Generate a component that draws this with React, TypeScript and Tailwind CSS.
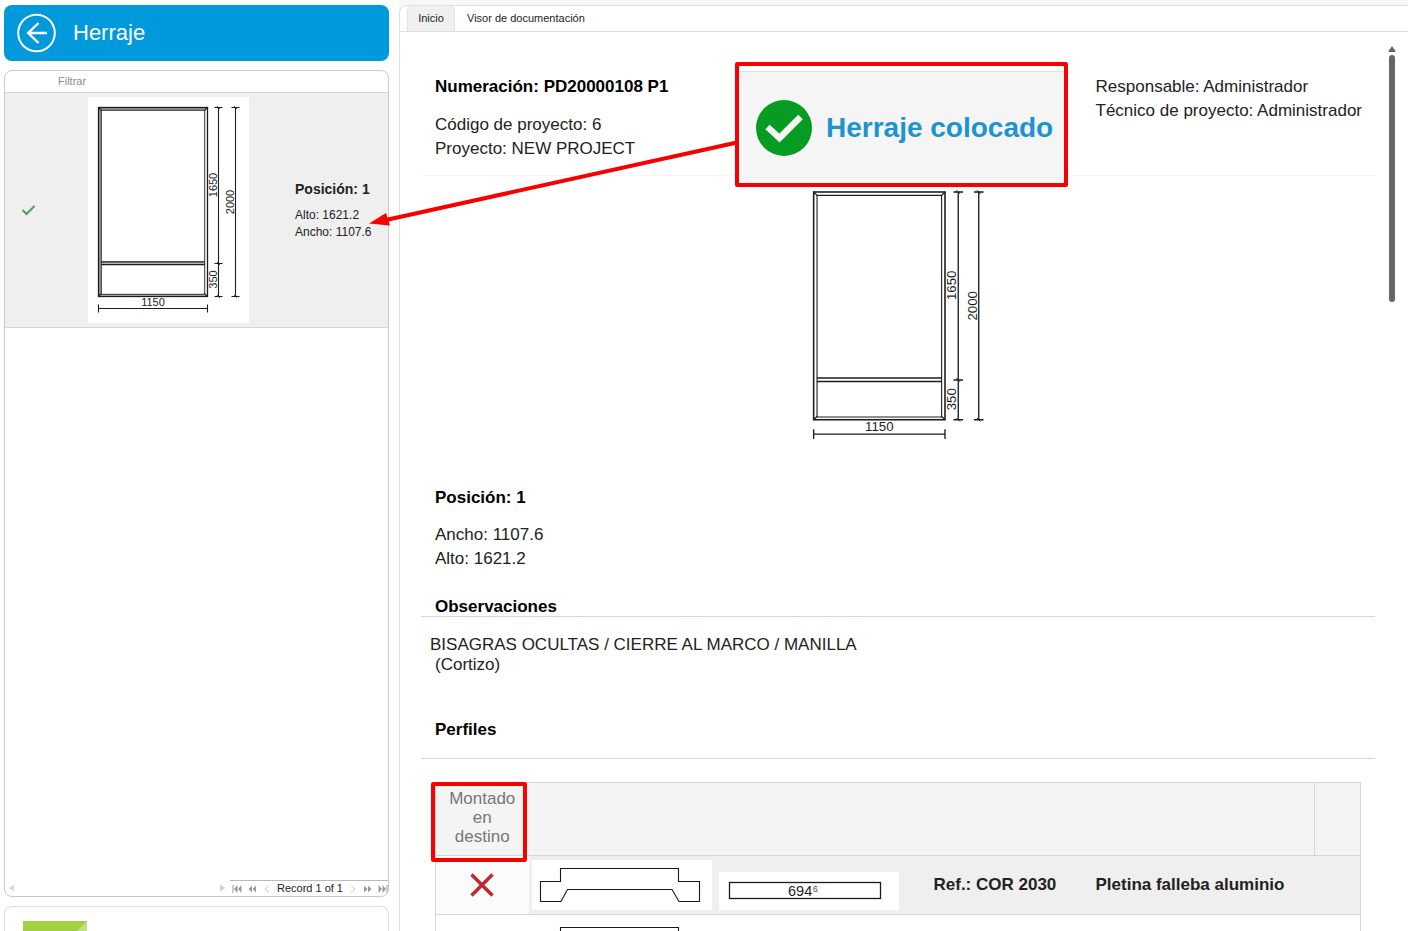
import type { ReactNode } from "react";

function WindowDrawing({ className, shaded }: { className: string; shaded?: boolean }) {
  return (
    <svg viewBox="0 0 161 226" className={className} role="img" aria-label="Ventana 1150 x 2000">
      <rect width="161" height="226" fill="#fff" />
      {shaded && (
        <g fill="#9c9c9c">
          <path d="M10.5 10.5H119.5L116.7 13.3H13.3V197.3L10.5 199.500Z" />
          <path d="M13.3 164.500H116.7V167H13.3ZM13.3 197.3H116.7L119.5 199.5H10.500Z" fill="#b4b4b4" />
        </g>
      )}
      <g fill="none" stroke="#1c1c1c" strokeWidth="1.1">
        <rect x="10.5" y="10.5" width="109" height="189" strokeWidth="1.3" />
        <path d="M13.3 197.3V13.3H116.7V197.3Z" strokeWidth="0.9" />
        <path d="M13.3 164.9H116.7M13.3 167.7H116.7" strokeWidth="1.3" />
        <path d="M10.5 10.5l3 3M119.5 10.5l-3 3M10.5 199.5l3-3M119.5 199.5l-3-3" />
        <path d="M130.5 10.5V199.5M147.5 10.5V199.5M10.5 211.5H119.5" />
        <path d="M126.5 10.5h8M126.5 166.5h8M126.5 199.5h8M143.5 10.5h8M143.5 199.5h8" />
        <path d="M129 9l3 3M129 165l3 3M129 198l3 3M146 9l3 3M146 198l3 3" strokeWidth="0.8" />
        <path d="M10.5 207.5v8M119.5 207.5v8" />
      </g>
      <g fill="#1c1c1c" fontSize="11" textAnchor="middle" fontFamily="Liberation Sans, sans-serif">
        <text x="65" y="209">1150</text>
        <text transform="translate(128.5 88) rotate(-90)">1650</text>
        <text transform="translate(128.5 182.5) rotate(-90)">350</text>
        <text transform="translate(146 105) rotate(-90)">2000</text>
      </g>
    </svg>
  );
}

function ProfileDrawing() {
  return (
    <svg viewBox="0 0 180 50" className="h-[50px] w-[180px] bg-white" role="img" aria-label="Perfil">
      <path
        d="M8.5 21.5H28.5V8.5H146.5V21.5H167.5V41.5H147L140 29.5H35.5L29 41.5H8.5Z"
        fill="none"
        stroke="#1a1a1a"
        strokeWidth="1.1"
      />
    </svg>
  );
}

function PagerButton({ label, faint, children }: { label: string; faint?: boolean; children: ReactNode }) {
  return (
    <button type="button" aria-label={label} className={faint ? "text-[#cfcfcf]" : "text-[#9a9a9a]"}>
      <svg viewBox="0 0 10 10" className="size-[10px]" fill="currentColor">
        {children}
      </svg>
    </button>
  );
}

function Sidebar() {
  return (
    <aside className="flex h-full w-[389px] shrink-0 flex-col gap-[9px] pl-1 pt-[5px]">
      <header className="flex h-14 shrink-0 items-center gap-[17px] rounded-lg bg-[#0099dc] pb-px pl-3 text-white">
        <button type="button" aria-label="Volver">
          <svg viewBox="0 0 40 40" className="size-10" fill="none" stroke="currentColor">
            <circle cx="20.5" cy="20" r="18.3" strokeWidth="2" />
            <path d="M31 20H12M22.5 10L12.2 20L22.5 30" strokeWidth="2.4" />
          </svg>
        </button>
        <h1 className="text-[22px]">Herraje</h1>
      </header>

      <section className="flex min-h-0 flex-1 flex-col overflow-hidden rounded-lg border border-[#c9c9c9]">
        <div className="flex h-[22px] shrink-0 items-center border-b border-[#d6d6d6] pl-[53px]">
          <button type="button" className="text-[11px] text-[#8a8a8a]">
            Filtrar
          </button>
        </div>
        <div className="flex items-center border-b border-[#d6d6d6] bg-[#efefef] py-1">
          <div className="flex w-[83px] shrink-0 pl-4">
            <svg viewBox="0 0 16 14" className="h-[14px] w-4" fill="none" stroke="#4c9f62" strokeWidth="2">
              <path d="M1.5 7L5.5 11L13.5 3" />
            </svg>
          </div>
          <WindowDrawing className="h-[226px] w-[161px] shrink-0" shaded />
          <div className="pl-[46px] text-[#222]">
            <h2 className="mb-2 text-sm leading-5 font-bold">Posición: 1</h2>
            <p className="text-xs leading-[17px]">Alto: 1621.2</p>
            <p className="text-xs leading-[17px]">Ancho: 1107.6</p>
          </div>
        </div>
        <footer className="mt-auto flex h-4 items-center">
          <svg viewBox="0 0 6 8" className="ml-[3px] h-2 w-1.5" fill="#dcdcdc">
            <path d="M6 0.5V7.5L0.5 4Z" />
          </svg>
          <svg viewBox="0 0 6 8" className="mr-1 ml-auto h-2 w-1.5" fill="#d0d0d0">
            <path d="M0 0.5V7.5L5.5 4Z" />
          </svg>
          <nav aria-label="Registros" className="flex h-full items-center gap-[5px] border-t border-[#b9b9b9] pl-0.5">
            <PagerButton label="Primero">
              <path d="M0.5 1H1.5V9H0.5ZM5.5 1V9L2 5ZM9.5 1V9L6 5Z" />
            </PagerButton>
            <PagerButton label="Página anterior">
              <path d="M5 1.5V8.5L1.5 5ZM9 1.5V8.5L5.5 5Z" />
            </PagerButton>
            <PagerButton label="Anterior" faint>
              <path d="M7 1.5L3 5L7 8.5" fill="none" stroke="currentColor" />
            </PagerButton>
            <span className="text-[11px] whitespace-nowrap text-[#222]">Record 1 of 1</span>
            <PagerButton label="Siguiente" faint>
              <path d="M3 1.5L7 5L3 8.5" fill="none" stroke="currentColor" />
            </PagerButton>
            <PagerButton label="Página siguiente">
              <path d="M1 1.5V8.5L4.5 5ZM5 1.5V8.5L8.5 5Z" />
            </PagerButton>
            <PagerButton label="Último">
              <path d="M8.5 1H9.5V9H8.5ZM0.5 1V9L4 5ZM4.5 1V9L8 5Z" />
            </PagerButton>
          </nav>
        </footer>
      </section>

      <section className="h-[25px] shrink-0 overflow-hidden rounded-t-lg border border-b-0 border-[#e0e0e0] pt-[14px] pl-[18px]">
        <svg viewBox="0 0 64 12" className="h-3 w-16">
          <rect width="64" height="12" fill="#a4cf42" />
          <path d="M64 0V12H52Z" fill="#bfe07c" />
        </svg>
      </section>
    </aside>
  );
}

function ProfilesTable() {
  return (
    <table className="w-full table-fixed border-collapse border border-[#d6d6d6] text-[17px]">
      <colgroup>
        <col className="w-[93px]" />
        <col className="w-[187px]" />
        <col className="w-[187px]" />
        <col className="w-[171px]" />
        <col />
        <col className="w-[46px]" />
      </colgroup>
      <thead className="bg-[#f4f4f4]">
        <tr className="h-[73px]">
          <th className="relative px-3 pb-1 leading-[19px] font-normal text-[#777]">
            Montado en destino
            <span className="absolute -top-px right-[2px] -bottom-[7px] -left-[5px] rounded-xs border-4 border-[#f80000]" />
          </th>
          <th colSpan={4} />
          <th className="border-l border-[#d6d6d6]" />
        </tr>
      </thead>
      <tbody>
        <tr className="h-[59px] border-y border-[#d6d6d6] bg-[#efefef] text-[#222]">
          <td className="bg-[#fcfcfc]">
            <svg viewBox="0 0 24 24" className="mx-auto size-6" stroke="#c1272d" strokeWidth="3.4" role="img" aria-label="No">
              <path d="M1.5 1.5L22.5 22.5M22.5 1.5L1.5 22.5" />
            </svg>
          </td>
          <td className="p-0 pl-[3px]">
            <ProfileDrawing />
          </td>
          <td className="p-0 pt-3 pl-[3px]">
            <svg viewBox="0 0 180 38" className="h-[38px] w-[180px] bg-white" role="img" aria-label="Longitud 694,6">
              <rect x="10.5" y="10.5" width="151" height="16" fill="none" stroke="#1a1a1a" strokeWidth="1.3" />
              <text x="69" y="23.5" fontSize="14.5" fill="#222" fontFamily="Liberation Sans, sans-serif">
                694
              </text>
              <text x="94" y="20" fontSize="8.5" fill="#444" fontFamily="Liberation Sans, sans-serif">
                6
              </text>
            </svg>
          </td>
          <td className="pl-[31px] font-bold">Ref.: COR 2030</td>
          <td className="pl-[22px] font-bold">Pletina falleba aluminio</td>
          <td />
        </tr>
        <tr className="h-[59px]">
          <td />
          <td className="p-0 pl-[3px]">
            <ProfileDrawing />
          </td>
          <td colSpan={4} />
        </tr>
      </tbody>
    </table>
  );
}

function Content() {
  return (
    <main className="flex h-full min-w-0 flex-1 flex-col bg-[#f8f8f8] pt-[5px]">
      <div className="flex min-h-0 flex-1 flex-col rounded-tl-lg border-t border-l border-[#e0e0e0] bg-white">
        <nav className="flex h-[26px] shrink-0 border-b border-[#dedede] pl-[7px] text-[11px] text-[#222]">
          <button type="button" className="w-12 rounded-t-sm border-x border-[#e4e4e4] bg-[#f0f0f0]">
            Inicio
          </button>
          <button type="button" className="px-3">
            Visor de documentación
          </button>
        </nav>

        <div className="flex min-h-0 flex-1 overflow-hidden">
          <div className="min-w-0 flex-1 pl-[21px] text-[17px] text-[#222]">
            <div className="flex h-36 justify-between border-b border-[#f6f6f6] pt-[43px] pr-[13px] pl-3.5 leading-6">
              <div>
                <h2 className="mb-3.5 font-bold text-black">Numeración: PD20000108 P1</h2>
                <p>Código de proyecto: 6</p>
                <p>Proyecto: NEW PROJECT</p>
              </div>
              <div>
                <p>Responsable: Administrador</p>
                <p>Técnico de proyecto: Administrador</p>
              </div>
            </div>

            <div className="flex justify-center pt-[3px]">
              <WindowDrawing className="h-[273px] w-[194px]" />
            </div>

            <section className="border-b border-[#d6d6d6] pt-[34px] pl-3.5 leading-6">
              <h3 className="mb-[13px] font-bold text-black">Posición: 1</h3>
              <p>Ancho: 1107.6</p>
              <p>Alto: 1621.2</p>
              <h3 className="mt-[26px] -mb-px leading-5 font-bold text-black">Observaciones</h3>
            </section>

            <section className="border-b border-[#d6d6d6] pt-[18px] pb-[18px] leading-5">
              <p className="pl-[9px]">BISAGRAS OCULTAS / CIERRE AL MARCO / MANILLA</p>
              <p className="pl-3.5">(Cortizo)</p>
              <h3 className="mt-[45px] pl-3.5 font-bold text-black">Perfiles</h3>
            </section>

            <div className="pt-[23px] pr-3.5 pl-3.5">
              <ProfilesTable />
            </div>
          </div>

          <div className="flex w-[33px] shrink-0 flex-col items-center gap-[3px] pt-[14px]" aria-hidden="true">
            <svg viewBox="0 0 8 6" className="h-1.5 w-2" fill="#666">
              <path d="M4 0L8 6H0Z" />
            </svg>
            <div className="h-[247px] w-1.5 rounded-full bg-[#666]" />
          </div>
        </div>
      </div>
    </main>
  );
}

function StatusCallout() {
  return (
    <div className="absolute top-[62px] left-[735px] rounded-xs border-4 border-[#f80000] bg-white pt-[5px]">
      <div className="flex h-28 items-center gap-3.5 border-t border-[#e2e2e2] bg-[#f5f5f5] pt-px pr-[11px] pl-[17px]">
        <svg viewBox="0 0 56 56" className="size-14">
          <circle cx="28" cy="28" r="28" fill="#069c23" />
          <path d="M11.5 27L23.5 38L44.5 17" fill="none" stroke="#f5f5f5" strokeWidth="6.4" />
        </svg>
        <strong className="text-[28px] whitespace-nowrap text-[#1c94cf]">Herraje colocado</strong>
      </div>
    </div>
  );
}

export default function App() {
  return (
    <div className="relative flex h-screen gap-[10px] overflow-hidden bg-white font-['Liberation_Sans',sans-serif]">
      <Sidebar />
      <Content />
      <svg viewBox="0 0 370 90" className="pointer-events-none absolute top-[140px] left-[368px] h-[90px] w-[370px]">
        <path d="M369 2.5L18 80" stroke="#f80000" strokeWidth="4" />
        <path d="M1 83.5L18 73L22 85.5Z" fill="#f80000" />
      </svg>
      <StatusCallout />
    </div>
  );
}
